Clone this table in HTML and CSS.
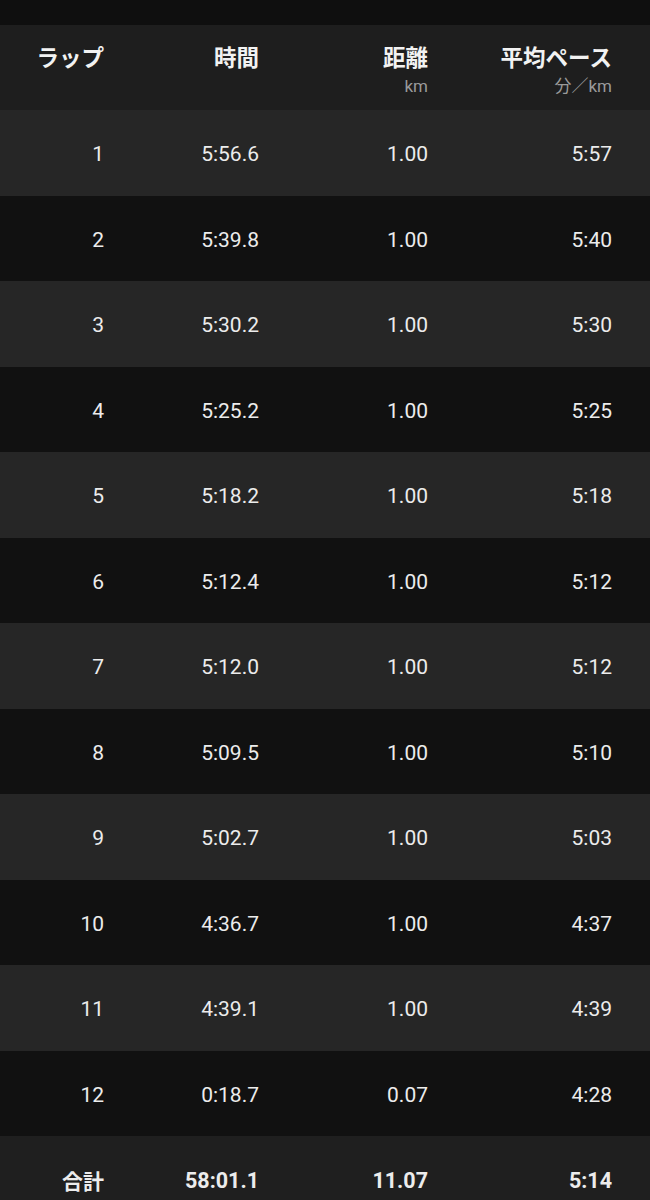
FILE: index.html
```html
<!DOCTYPE html>
<html lang="ja">
<head>
<meta charset="utf-8">
<link rel="stylesheet" href="styles.css">
</head>
<body>
<div class="topstrip"></div>
<div class="table">
  <div class="row head">
    <div class="cell"><span class="title">ラップ</span></div>
    <div class="cell"><span class="title">時間</span></div>
    <div class="cell"><span class="title">距離</span><span class="unit">km</span></div>
    <div class="cell"><span class="title">平均ペース</span><span class="unit">分／km</span></div>
  </div>
  <div class="row odd"><div class="cell">1</div><div class="cell">5:56.6</div><div class="cell">1.00</div><div class="cell">5:57</div></div>
  <div class="row even"><div class="cell">2</div><div class="cell">5:39.8</div><div class="cell">1.00</div><div class="cell">5:40</div></div>
  <div class="row odd"><div class="cell">3</div><div class="cell">5:30.2</div><div class="cell">1.00</div><div class="cell">5:30</div></div>
  <div class="row even"><div class="cell">4</div><div class="cell">5:25.2</div><div class="cell">1.00</div><div class="cell">5:25</div></div>
  <div class="row odd"><div class="cell">5</div><div class="cell">5:18.2</div><div class="cell">1.00</div><div class="cell">5:18</div></div>
  <div class="row even"><div class="cell">6</div><div class="cell">5:12.4</div><div class="cell">1.00</div><div class="cell">5:12</div></div>
  <div class="row odd"><div class="cell">7</div><div class="cell">5:12.0</div><div class="cell">1.00</div><div class="cell">5:12</div></div>
  <div class="row even"><div class="cell">8</div><div class="cell">5:09.5</div><div class="cell">1.00</div><div class="cell">5:10</div></div>
  <div class="row odd"><div class="cell">9</div><div class="cell">5:02.7</div><div class="cell">1.00</div><div class="cell">5:03</div></div>
  <div class="row even"><div class="cell">10</div><div class="cell">4:36.7</div><div class="cell">1.00</div><div class="cell">4:37</div></div>
  <div class="row odd"><div class="cell">11</div><div class="cell">4:39.1</div><div class="cell">1.00</div><div class="cell">4:39</div></div>
  <div class="row even"><div class="cell">12</div><div class="cell">0:18.7</div><div class="cell">0.07</div><div class="cell">4:28</div></div>
  <div class="row total"><div class="cell">合計</div><div class="cell">58:01.1</div><div class="cell">11.07</div><div class="cell">5:14</div></div>
</div>
</body>
</html>
```

FILE: styles.css
```css
html, body {
  margin: 0;
  padding: 0;
  background: #111111;
}
body {
  font-family: "Roboto", "Noto Sans CJK JP", sans-serif;
  color: #ececec;
  overflow: hidden;
}
.topstrip {
  height: 25px;
  background: #0f0f0f;
}
.table {
  display: flex;
  flex-direction: column;
}
.row {
  display: grid;
  grid-template-columns: 104px 155px 169px 184px;
  height: 85.5px;
  align-items: center;
  font-size: 21px;
}
.cell {
  text-align: right;
  line-height: 1;
  padding-top: 4px;
}
.odd { background: #262626; }
.even { background: #111111; }
.head {
  height: 85px;
  background: #1e1e1e;
  align-items: start;
}
.head .cell {
  display: flex;
  flex-direction: column;
  align-items: flex-end;
  padding-top: 19px;
}
.title {
  font-family: "Noto Sans CJK JP", sans-serif;
  font-weight: 700;
  font-size: 22.5px;
  line-height: 24px;
  color: #f2f2f2;
}
.unit {
  font-family: "Roboto", "Noto Sans CJK JP", sans-serif;
  font-size: 17px;
  line-height: 18px;
  color: #9a9a9a;
  margin-top: 9px;
}
.total {
  background: #1f1f1f;
  font-weight: 700;
  font-size: 21.5px;
}
.total .cell:first-child {
  font-family: "Noto Sans CJK JP", sans-serif;
  font-size: 21px;
}
```
